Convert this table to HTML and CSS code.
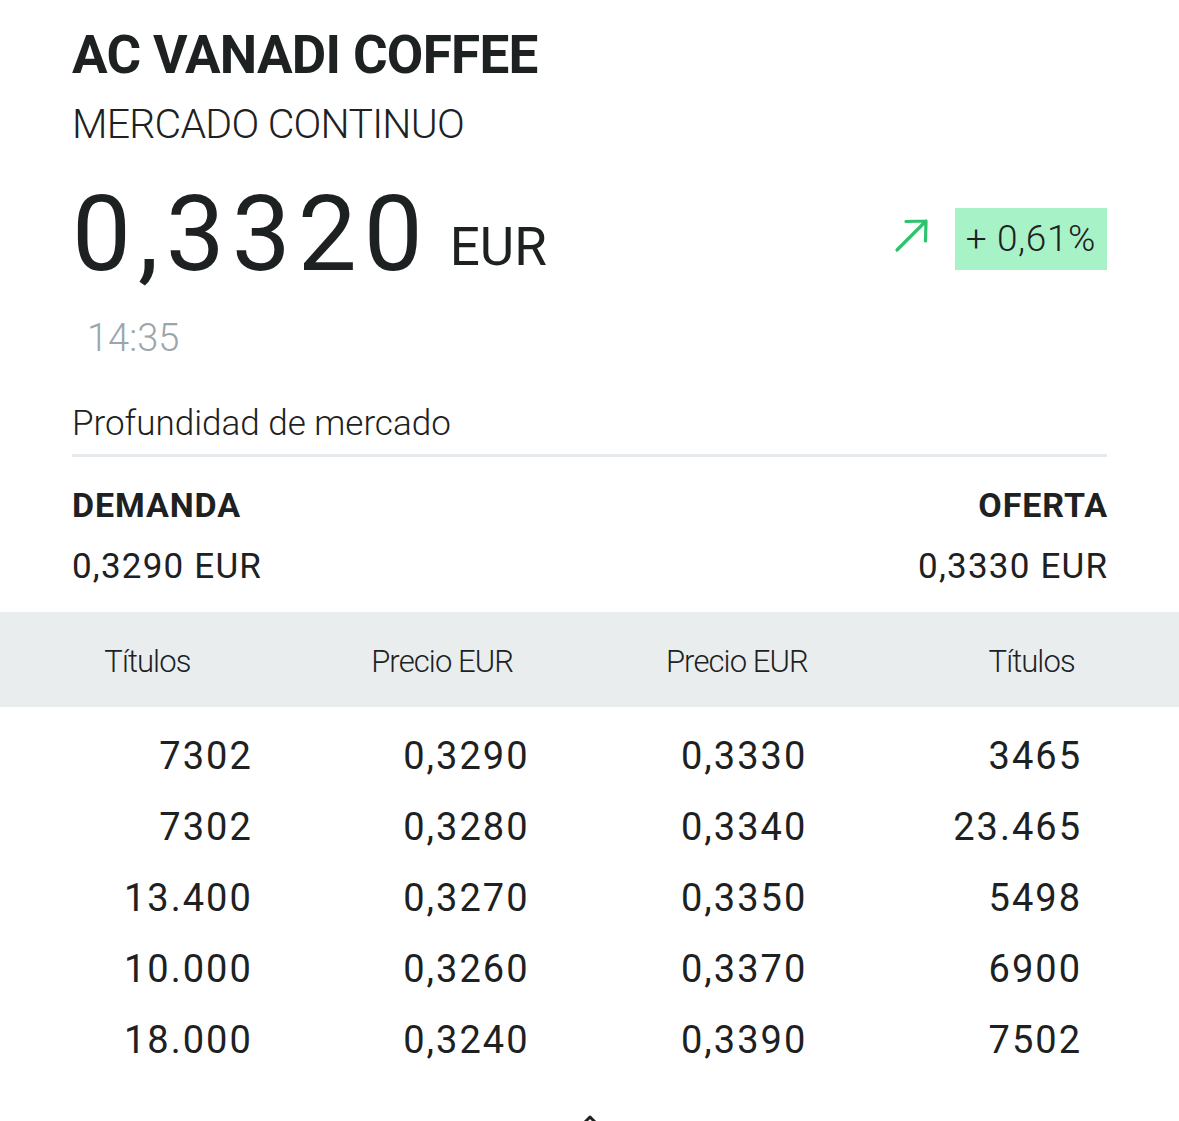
FILE: index.html
```html
<!DOCTYPE html>
<html lang="es">
<head>
<meta charset="utf-8">
<title>AC VANADI COFFEE</title>
<link rel="stylesheet" href="styles.css">
</head>
<body>
<main class="page">
  <section class="head">
    <h1 class="title">AC VANADI COFFEE</h1>
    <div class="market">MERCADO CONTINUO</div>
    <div class="price-row">
      <div class="price"><span class="price-value">0,3320</span><span class="price-cur">EUR</span></div>
      <div class="change">
        <svg class="arrow" width="38" height="38" viewBox="0 0 38 38" aria-hidden="true">
          <path d="M5 33 L34 4 M14 4.5 L34 4 L33.5 24" fill="none" stroke="#2bc46c" stroke-width="3.2" stroke-linecap="round" stroke-linejoin="round"/>
        </svg>
        <span class="badge">+ 0,61%</span>
      </div>
    </div>
    <div class="time">14:35</div>
    <div class="section-title">Profundidad de mercado</div>
    <div class="sides">
      <div class="side">
        <div class="side-label">DEMANDA</div>
        <div class="side-value">0,3290 EUR</div>
      </div>
      <div class="side side-right">
        <div class="side-label">OFERTA</div>
        <div class="side-value">0,3330 EUR</div>
      </div>
    </div>
  </section>
  <div class="table-head">
    <span>Títulos</span><span>Precio EUR</span><span>Precio EUR</span><span>Títulos</span>
  </div>
  <div class="rows">
    <div class="row"><span>7302</span><span>0,3290</span><span>0,3330</span><span>3465</span></div>
    <div class="row"><span>7302</span><span>0,3280</span><span>0,3340</span><span>23.465</span></div>
    <div class="row"><span>13.400</span><span>0,3270</span><span>0,3350</span><span>5498</span></div>
    <div class="row"><span>10.000</span><span>0,3260</span><span>0,3370</span><span>6900</span></div>
    <div class="row"><span>18.000</span><span>0,3240</span><span>0,3390</span><span>7502</span></div>
  </div>
  <div class="more">
    <svg width="24" height="14" viewBox="0 0 24 14" aria-hidden="true">
      <path d="M4 12 L12 4 L20 12" fill="none" stroke="#1d2122" stroke-width="3" stroke-linecap="round" stroke-linejoin="round"/>
    </svg>
  </div>
</main>
</body>
</html>
```
FILE: styles.css
```css
* { box-sizing: border-box; }
html, body { margin: 0; padding: 0; background: #ffffff; }
body {
  font-family: Roboto, "Liberation Sans", sans-serif;
  color: #1d2122;
  overflow: hidden;
}
.page { width: 1179px; }
.head { padding: 29px 72px 0 72px; }
.title {
  margin: 0;
  font-size: 53px;
  line-height: 53px;
  font-weight: 700;
  letter-spacing: -0.7px;
}
.market {
  margin-top: 22px;
  font-size: 41px;
  line-height: 41px;
  font-weight: 300;
  letter-spacing: -0.75px;
}
.price-row {
  margin-top: 37px;
  display: flex;
  justify-content: space-between;
  align-items: flex-start;
}
.price {
  height: 105px;
  line-height: 105px;
  white-space: nowrap;
}
.price-value {
  font-size: 105px;
  font-weight: 400;
  letter-spacing: 7px;
}
.price-cur {
  margin-left: 20px;
  font-size: 53px;
  font-weight: 400;
  vertical-align: 5px;
}
.change {
  display: flex;
  align-items: center;
  gap: 25px;
  margin-top: 26px;
}
.arrow { display: block; margin-top: -6px; }
.badge {
  display: block;
  background: #a8f2c7;
  padding: 0 11px 0 11px;
  height: 62px;
  line-height: 62px;
  font-size: 37px;
  font-weight: 300;
  letter-spacing: 0.6px;
  color: #1d2122;
}
.time {
  margin-top: 32px;
  padding-left: 15px;
  font-size: 38px;
  line-height: 38px;
  font-weight: 300;
  color: #9aa5ad;
}
.section-title {
  margin-top: 49px;
  font-size: 35px;
  line-height: 35px;
  font-weight: 300;
  padding-bottom: 13px;
  border-bottom: 3px solid #e6eaec;
}
.sides {
  display: flex;
  justify-content: space-between;
  padding-top: 31px;
}
.side-right { text-align: right; }
.side-label {
  font-size: 34px;
  line-height: 34px;
  font-weight: 700;
  letter-spacing: 0.9px;
}
.side-right .side-label { margin-right: -0.9px; }
.side-value {
  margin-top: 27px;
  font-size: 35px;
  line-height: 35px;
  font-weight: 400;
  letter-spacing: 1.2px;
}
.side-right .side-value { margin-right: -1.2px; }
.table-head {
  margin-top: 28px;
  background: #e9edee;
  height: 95px;
  padding-top: 34px;
  display: grid;
  grid-template-columns: repeat(4, 1fr);
  text-align: center;
  font-size: 31px;
  line-height: 31px;
  font-weight: 300;
  letter-spacing: -0.9px;
}
.rows { padding-top: 14px; }
.row {
  display: grid;
  grid-template-columns: repeat(4, 1fr);
  height: 71px;
  line-height: 71px;
  font-size: 38px;
  font-weight: 400;
  text-align: right;
  letter-spacing: 2px;
}
.row span:nth-child(1) { padding-right: 42px; }
.row span:nth-child(2) { padding-right: 60px; }
.row span:nth-child(3) { padding-right: 77px; }
.row span:nth-child(4) { padding-right: 97px; }
.more {
  display: flex;
  justify-content: center;
  padding-top: 37px;
}
.more svg { display: block; }
```
